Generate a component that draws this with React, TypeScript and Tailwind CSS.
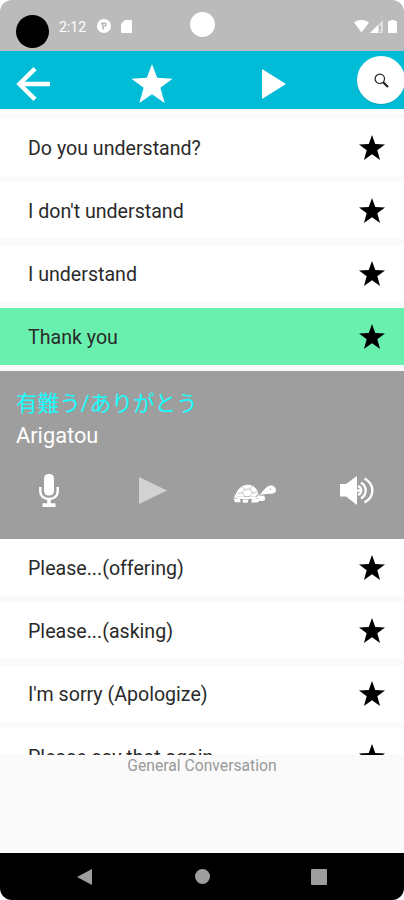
interface Phrase {
  text: string;
  selected?: boolean;
}

const phrasesBefore: Phrase[] = [
  { text: "Do you understand?" },
  { text: "I don't understand" },
  { text: "I understand" },
  { text: "Thank you", selected: true },
];

const phrasesAfter: Phrase[] = [
  { text: "Please...(offering)" },
  { text: "Please...(asking)" },
  { text: "I'm sorry (Apologize)" },
  { text: "Please say that again" },
];

function Star({ className }: { className: string }) {
  return (
    <svg viewBox="0 0 42 40" className={className} fill="currentColor">
      <path d="M21 0 26.3 14.2 42 15 29.6 24.4 34 40 21 31 8 40 12.4 24.4 0 15 15.7 14.2Z" />
    </svg>
  );
}

function Turtle() {
  return (
    <svg viewBox="0 0 43 19" className="h-[19px] w-[43px]">
      <g fill="#fff">
        {/* shell */}
        <path d="M2.500 11.500C4 5 9 .8 15 .8c5 0 8.500 3 10.500 8.500l-3 3.500H6Z" />
        <path d="M.5 9.500 5 12.800 23.500 13l3-3.200-.5 4.200-4.500 1H5L0 13l2.500-.8Z" />
        {/* neck and head */}
        <path d="M26.500 10.500c3-2 4.500-6 9-8.500 4-1.500 7.500 1 7.500 4.500-.5 3.500-4.500 3.300-7.500 3.300-3.500 0-6 1.200-9 .7Z" />
        {/* feet */}
        <path d="M.5 14.500 7 15.300l.5 3H2Z" />
        <path d="M9.500 15.500h6l-1 3.200h-4.500Z" />
        <path d="m18.500 15.500 7-1 1.500 2.300-3 1.700h-5.500Z" />
        <rect x="25.500" y="11.500" width="6.500" height="5.500" rx="2.500" />
      </g>
      <g fill="none" stroke="#9e9e9e" strokeWidth=".6">
        <path d="m12 5.500 5-.5 2.500 4-3 3.500h-5l-2-3.700ZM12 5.500 9 3M17 5l2-3M19.500 9l5-1M9.500 8.800l-5 .5" />
      </g>
      <circle cx="37.500" cy="5.200" r=".7" fill="#9e9e9e" />
    </svg>
  );
}

function PhraseRow({ text, selected }: Phrase) {
  return (
    <div
      className={`flex h-[57px] shrink-0 items-center justify-between pl-7 pr-[19px] ${
        selected ? "bg-[#69f0ae]" : "bg-white"
      }`}
    >
      <span className="whitespace-nowrap pt-[2px] text-[19.600px] leading-[24px] text-[#2a2a2a]">{text}</span>
      <Star className="h-[25px] w-[26px] text-black" />
    </div>
  );
}

function StatusBar() {
  return (
    <div className="flex h-[51px] shrink-0 items-start bg-[#bbb]">
      <div className="ml-4 mt-[15px] size-[33px] rounded-full bg-black" />
      <span className="ml-[10px] mt-[17px] w-[29px] whitespace-nowrap text-[14px] leading-[20px] text-white">2:12</span>
      <svg viewBox="0 0 14 14" className="ml-[9px] mt-[19px] size-[14px]">
        <circle cx="7" cy="7" r="7" fill="#fff" />
        <path d="M4 3.500h5.500v4H7v3H5.200V5.500H4Z" fill="#bbb" />
        <path d="M6.500 5h1.400v1.300H6.500Z" fill="#fff" />
      </svg>
      <svg viewBox="0 0 11 13" className="ml-[10px] mt-[20px] h-[13px] w-[11px]">
        <path d="M4 0h6a1 1 0 0 1 1 1v11a1 1 0 0 1-1 1H1a1 1 0 0 1-1-1V4Z" fill="#fff" />
      </svg>
      <div className="ml-[58px] mt-[12px] size-[25px] rounded-full bg-white" />
      <svg viewBox="0 0 15 13" className="ml-[139px] mt-[20px] h-[13px] w-[15px]">
        <path d="M0 2.500C4-.8 11-.8 15 2.500L7.500 12.500Z" fill="#fff" />
      </svg>
      <svg viewBox="0 0 14 13" className="ml-px mt-[20px] h-[13px] w-[14px]">
        <path d="M13 0v13H0Z" fill="#dedede" />
        <path d="M8 5v8H0Z" fill="#fff" />
        <path d="M10 6v4M10 11v1" stroke="#a5a5a5" strokeWidth="1.200" />
      </svg>
      <svg viewBox="0 0 9 13" className="ml-[4px] mt-[20px] h-[13px] w-[9px]">
        <path d="M2.500 0h4v1H8a1 1 0 0 1 1 1v10a1 1 0 0 1-1 1H1a1 1 0 0 1-1-1V2a1 1 0 0 1 1-1h1.500Z" fill="#fff" />
      </svg>
    </div>
  );
}

function Toolbar() {
  return (
    <div className="flex h-[58px] shrink-0 items-start bg-[#00bcd7]">
      <svg viewBox="0 0 34 34" className="ml-4 mt-[16px] size-[34px]" fill="none" stroke="#fff" strokeWidth="4.500">
        <path d="M34 17H4M19 1.700 3.500 17 19 32.300" />
      </svg>
      <Star className="ml-[81px] mt-[13px] h-[39px] w-[42px] text-white" />
      <svg viewBox="0 0 24 30" className="ml-[89px] mt-[18px] h-[30px] w-[24px]" fill="#fff">
        <path d="M0 0v30l24-15Z" />
      </svg>
      <div className="-mr-px ml-[71px] mt-[5px] flex size-[48px] shrink-0 items-center justify-center rounded-full bg-white shadow-[0_1px_1px_rgba(0,0,0,0.15)]">
        <svg viewBox="0 0 15 15" className="size-[15px]" fill="none" stroke="#222">
          <circle cx="5.800" cy="5.800" r="4.700" strokeWidth="1.200" />
          <path d="m9 9 5 5" strokeWidth="2.200" />
        </svg>
      </div>
    </div>
  );
}

function PhraseDetail() {
  return (
    <div className="h-[168px] shrink-0 bg-[#9e9e9e] pt-[18px]">
      <p className="whitespace-nowrap pl-4 text-[21.600px] leading-[30px] text-[#18ffff]">有難う/ありがとう</p>
      <p className="pl-4 text-[21.800px] leading-[33px] text-white">Arigatou</p>
      <div className="flex h-[76px] items-center">
        <svg viewBox="0 0 20 33" className="ml-[39px] h-[33px] w-[20px]">
          <rect x="5" y="0" width="10" height="21.500" rx="4.500" fill="#fff" />
          <path d="M1.300 13v4.500c0 4.200 3.500 7.500 8.700 7.500s8.700-3.300 8.700-7.500V13" fill="none" stroke="#fff" strokeWidth="2.500" />
          <path d="M8.200 24h3.600v5.200H16.500V33h-13v-3.800h4.700Z" fill="#fff" />
        </svg>
        <svg viewBox="0 0 28 27" className="ml-[80px] h-[27px] w-[28px]" fill="#d2d2d2">
          <path d="M0 0v27l28-13.500Z" />
        </svg>
        <div className="ml-[66px] mt-[7px]">
          <Turtle />
        </div>
        <svg viewBox="0 0 34 29" className="ml-[64px] h-[29px] w-[34px]" fill="none" stroke="#fff" strokeWidth="2.400">
          <path d="M0 8h6L17 0v29L6 20.500H0Z" fill="#fff" stroke="none" />
          <path d="M18 10.200a4.500 4.500 0 0 1 0 8.600" />
          <path d="M21 6.500c6.200 4 6.200 12 0 16" />
          <path d="M24.500 2.500c10.500 6 10.500 18 0 24" />
          <circle cx="18.500" cy="14.500" r="1.600" fill="#fff" stroke="none" />
        </svg>
      </div>
    </div>
  );
}

export default function App() {
  return (
    <div className="h-[900px] w-[404px] overflow-hidden bg-white font-[Roboto,'Noto_Sans_CJK_JP',sans-serif]">
      <div className="flex h-full flex-col overflow-hidden rounded-[12px] bg-[#fafafa]">
        <StatusBar />
        <Toolbar />
        <div className="flex h-[646px] shrink-0 flex-col overflow-hidden">
          <div className="h-[5px] shrink-0 bg-white" />
          <div className="mt-[5px] flex shrink-0 flex-col gap-[6px]">
            {phrasesBefore.map((phrase) => (
              <PhraseRow key={phrase.text} {...phrase} />
            ))}
            <PhraseDetail />
          </div>
          <div className="flex shrink-0 flex-col gap-[6px]">
            {phrasesAfter.map((phrase) => (
              <PhraseRow key={phrase.text} {...phrase} />
            ))}
          </div>
        </div>
        <div className="h-[98px] shrink-0 text-center text-[15.700px] leading-[21px] text-[#999]">General Conversation</div>
        <nav className="flex h-[47px] shrink-0 items-center bg-black">
          <svg viewBox="0 0 15 16" className="ml-[77px] h-[16px] w-[15px]" fill="#9e9e9e">
            <path d="M15 0v16L0 8Z" />
          </svg>
          <div className="ml-[103px] size-[15px] rounded-full bg-[#9e9e9e]" />
          <div className="ml-[101px] size-[16px] rounded-[1px] bg-[#9e9e9e]" />
        </nav>
      </div>
    </div>
  );
}
